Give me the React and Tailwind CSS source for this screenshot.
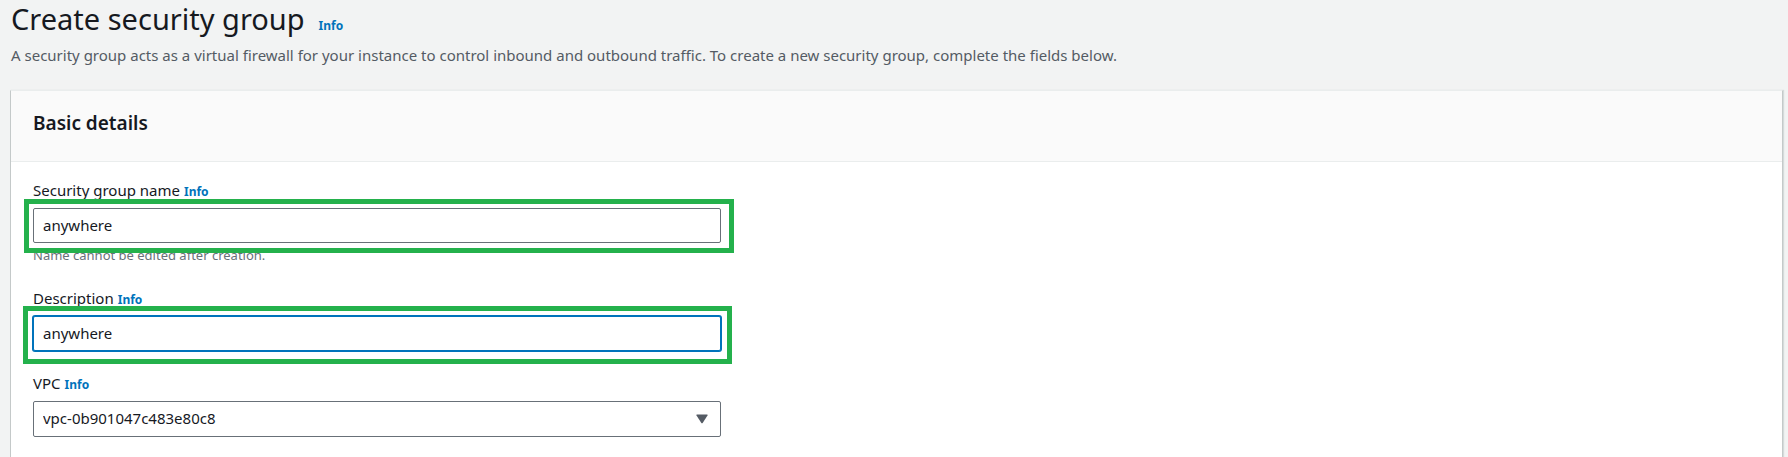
import React from 'react';

function Info() {
  return (
    <a href="#info" className="text-[12px] leading-none font-bold text-[#0073bb]">
      Info
    </a>
  );
}

function Field({ id, label, children }) {
  return (
    <div>
      <div className="flex items-baseline gap-1 leading-6">
        <label htmlFor={id}>{label}</label>
        <Info />
      </div>
      <div className="relative mt-1.5">{children}</div>
    </div>
  );
}

export default function App() {
  return (
    <main className="min-h-screen bg-[#f2f3f3] pr-[5px] pl-[10px] font-['Noto_Sans',sans-serif] text-[15px] text-[#16191f]">
      <header className="h-[90px] pl-px">
        <div className="flex items-baseline gap-3.5">
          <h1 className="text-[29px] leading-[38px]">Create security group</h1>
          <Info />
        </div>
        <p className="pt-[5px] leading-6 text-[#545b64]">
          A security group acts as a virtual firewall for your instance to control inbound and outbound traffic. To
          create a new security group, complete the fields below.
        </p>
      </header>

      <section className="min-h-[calc(100vh-90px)] border-x border-t border-x-[#c4c9c9] border-t-[#eaeded] bg-white shadow-[1px_0_1px_0_#d5dbdb]">
        <div className="border-b border-[#eaeded] bg-[#fafafa] px-[22px] pt-5 pb-[26px]">
          <h2 className="text-[19px] leading-6 font-semibold">Basic details</h2>
        </div>
        <form className="flex max-w-[732px] flex-col gap-5 px-[22px] pt-4">
          <Field id="group-name" label="Security group name">
            <input
              id="group-name"
              defaultValue="anywhere"
              className="block h-[35px] w-full rounded-[2px] border border-[#687078] bg-white px-[9px] pb-0.5 outline-none"
            />
            <p className="pt-0.5 pb-px text-[13px] leading-5 text-[#687078]">Name cannot be edited after creation.</p>
            <div className="pointer-events-none absolute -top-[9px] -right-[13px] -left-[9px] h-[54px] border-[5px] border-[#24b14c]" />
          </Field>
          <Field id="description" label="Description">
            <input
              id="description"
              defaultValue="anywhere"
              className="block h-[35px] w-full rounded-[2px] border border-[#0073bb] bg-white px-[9px] pb-0.5 ring-1 ring-[#0073bb] outline-none"
            />
            <div className="pointer-events-none absolute -top-[10px] -right-[11px] -left-[10px] h-[58px] border-[5px] border-[#24b14c]" />
          </Field>
          <Field id="vpc" label="VPC">
            <select
              id="vpc"
              className="block h-9 w-full appearance-none rounded-[2px] border border-[#687078] bg-white px-[9px] pb-0.5 outline-none"
            >
              <option>vpc-0b901047c483e80c8</option>
            </select>
            <svg
              viewBox="0 0 12 10"
              aria-hidden="true"
              className="pointer-events-none absolute top-[13px] right-[13px] h-[10px] w-3 fill-[#545b64]"
            >
              <path d="M1 .5h10q1 0 .5 1L6.8 8.7q-.8 1-1.6 0L.5 1.500Q0 .5 1 .5z" />
            </svg>
          </Field>
        </form>
      </section>
    </main>
  );
}
